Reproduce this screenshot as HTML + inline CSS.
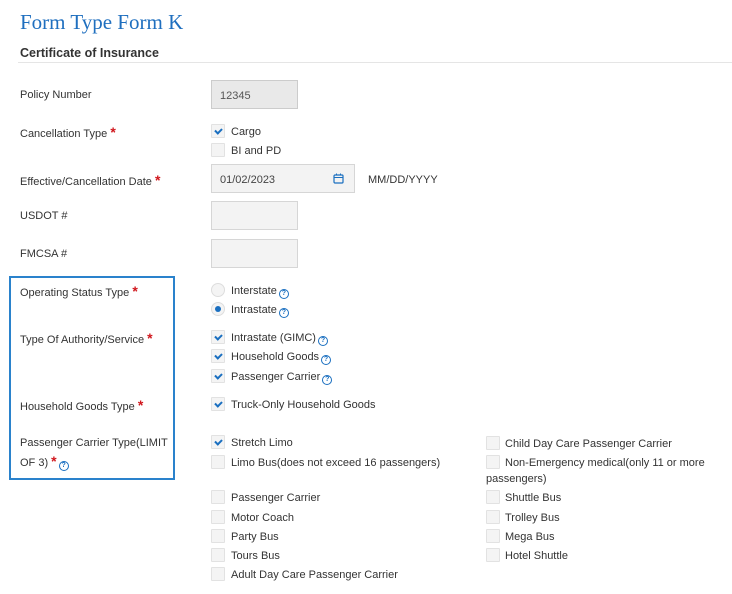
<!DOCTYPE html>
<html><head><style>
body{margin:0;width:732px;height:594px;background:#fff;position:relative;font-family:"Liberation Sans",Arial,sans-serif;font-size:11px;color:#333;overflow:hidden}
.a{position:absolute;white-space:nowrap;line-height:14px}
.t{position:absolute;left:20px;top:10px;font-family:"Liberation Serif",serif;font-size:21px;color:#1f6fbf}
.h{position:absolute;left:20px;top:46px;font-weight:bold;font-size:12.5px;color:#333}
.ln{position:absolute;left:18px;top:62px;width:714px;height:1px;background:#e5e5e5}
.s{color:#d0161c;font-weight:bold;font-size:14px}
.cb{position:absolute;width:12px;height:12px;border:1px solid #e2e2e2;background:#f4f4f4;border-radius:1px}
.cb.k::after{content:"";position:absolute;left:4px;top:2px;width:3px;height:5px;border:solid #1a6fc0;border-width:0 2px 2px 0;transform:rotate(45deg)}
.rd{position:absolute;width:12px;height:12px;border:1px solid #ddd;background:#f4f4f4;border-radius:50%}
.rd.k::after{content:"";position:absolute;left:3px;top:3px;width:6px;height:6px;border-radius:50%;background:#1a6fc0}
.q{display:inline-block;width:8px;height:8px;border:1.3px solid #1a6fc0;border-radius:50%;font-size:7px;line-height:8px;text-align:center;color:#1a6fc0;font-weight:bold;vertical-align:-1px;margin-left:2px}
.in{position:absolute;border:1px solid #d6d6d6;background:#f3f3f3;box-sizing:border-box}
.box{position:absolute;left:9px;top:276px;width:166px;height:204px;border:2px solid #2a82cc;box-sizing:border-box}
</style></head><body>
<div class="t">Form Type Form K</div>
<div class="h">Certificate of Insurance</div>
<div class="ln"></div>
<div class="box"></div>

<div class="a" style="left:20px;top:88px">Policy Number</div>
<div class="in" style="left:211px;top:80px;width:87px;height:29px;background:#e9e9e9;border-color:#ccc"></div>
<div class="a" style="left:220px;top:89px;color:#555">12345</div>

<div class="a" style="left:20px;top:125px">Cancellation Type <span class="s">*</span></div>
<div class="cb k" style="left:211px;top:124px"></div><div class="a" style="left:231px;top:125px">Cargo</div>
<div class="cb" style="left:211px;top:143px"></div><div class="a" style="left:231px;top:144px">BI and PD</div>

<div class="a" style="left:20px;top:173px">Effective/Cancellation Date <span class="s">*</span></div>
<div class="in" style="left:211px;top:164px;width:144px;height:29px"></div>
<div class="a" style="left:220px;top:173px;color:#444">01/02/2023</div>
<svg style="position:absolute;left:333px;top:173px" width="11" height="11" viewBox="0 0 11 11"><rect x="1" y="2" width="9" height="8" rx="1" fill="none" stroke="#1a6fc0" stroke-width="1.2"/><line x1="1" y1="4.5" x2="10" y2="4.5" stroke="#1a6fc0"/><line x1="3.5" y1="0.5" x2="3.5" y2="2.5" stroke="#1a6fc0"/><line x1="7.5" y1="0.5" x2="7.5" y2="2.5" stroke="#1a6fc0"/></svg>
<div class="a" style="left:368px;top:173px">MM/DD/YYYY</div>

<div class="a" style="left:20px;top:209px">USDOT #</div>
<div class="in" style="left:211px;top:201px;width:87px;height:29px"></div>
<div class="a" style="left:20px;top:247px">FMCSA #</div>
<div class="in" style="left:211px;top:239px;width:87px;height:29px"></div>

<div class="a" style="left:20px;top:284px">Operating Status Type <span class="s">*</span></div>
<div class="rd" style="left:211px;top:283px"></div><div class="a" style="left:231px;top:284px">Interstate<span class="q">?</span></div>
<div class="rd k" style="left:211px;top:302px"></div><div class="a" style="left:231px;top:303px">Intrastate<span class="q">?</span></div>

<div class="a" style="left:20px;top:331px">Type Of Authority/Service <span class="s">*</span></div>
<div class="cb k" style="left:211px;top:330px"></div><div class="a" style="left:231px;top:331px">Intrastate (GIMC)<span class="q">?</span></div>
<div class="cb k" style="left:211px;top:349px"></div><div class="a" style="left:231px;top:350px">Household Goods<span class="q">?</span></div>
<div class="cb k" style="left:211px;top:369px"></div><div class="a" style="left:231px;top:370px">Passenger Carrier<span class="q">?</span></div>

<div class="a" style="left:20px;top:398px">Household Goods Type <span class="s">*</span></div>
<div class="cb k" style="left:211px;top:397px"></div><div class="a" style="left:231px;top:398px">Truck-Only Household Goods</div>

<div class="a" style="left:20px;top:436px">Passenger Carrier Type(LIMIT</div>
<div class="a" style="left:20px;top:454px">OF 3) <span class="s">*</span><span class="q">?</span></div>

<div class="cb k" style="left:211px;top:435px"></div><div class="a" style="left:231px;top:436px">Stretch Limo</div>
<div class="cb" style="left:211px;top:455px"></div><div class="a" style="left:231px;top:456px">Limo Bus(does not exceed 16 passengers)</div>
<div class="cb" style="left:211px;top:490px"></div><div class="a" style="left:231px;top:491px">Passenger Carrier</div>
<div class="cb" style="left:211px;top:510px"></div><div class="a" style="left:231px;top:511px">Motor Coach</div>
<div class="cb" style="left:211px;top:529px"></div><div class="a" style="left:231px;top:530px">Party Bus</div>
<div class="cb" style="left:211px;top:548px"></div><div class="a" style="left:231px;top:549px">Tours Bus</div>
<div class="cb" style="left:211px;top:567px"></div><div class="a" style="left:231px;top:568px">Adult Day Care Passenger Carrier</div>

<div class="cb" style="left:486px;top:436px"></div><div class="a" style="left:505px;top:437px">Child Day Care Passenger Carrier</div>
<div class="cb" style="left:486px;top:455px"></div><div class="a" style="left:505px;top:456px">Non-Emergency medical(only 11 or more</div>
<div class="a" style="left:486px;top:472px">passengers)</div>
<div class="cb" style="left:486px;top:490px"></div><div class="a" style="left:505px;top:491px">Shuttle Bus</div>
<div class="cb" style="left:486px;top:510px"></div><div class="a" style="left:505px;top:511px">Trolley Bus</div>
<div class="cb" style="left:486px;top:529px"></div><div class="a" style="left:505px;top:530px">Mega Bus</div>
<div class="cb" style="left:486px;top:548px"></div><div class="a" style="left:505px;top:549px">Hotel Shuttle</div>
</body></html>
